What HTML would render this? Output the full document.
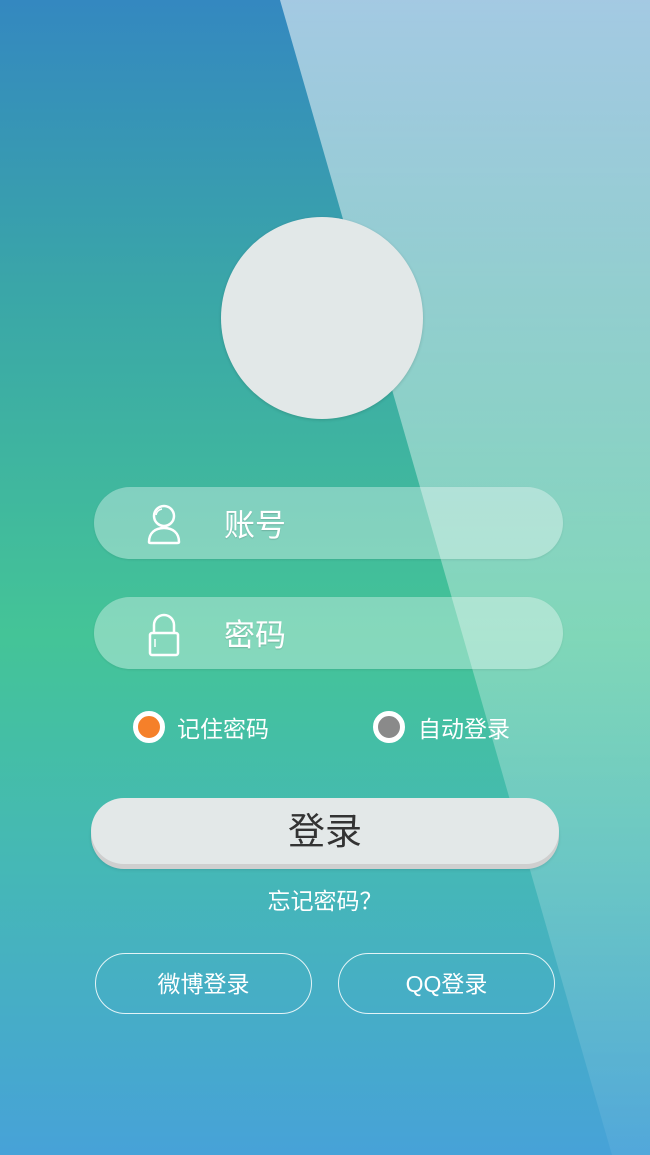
<!DOCTYPE html>
<html><head><meta charset="utf-8"><style>
body{margin:0;width:650px;height:1155px;overflow:hidden;position:relative;font-family:"Liberation Sans","Noto Sans CJK SC",sans-serif;
background:linear-gradient(180deg,#3488c0 0%,#3aa6a8 25%,#44c497 55%,#45b8b6 75%,#47a2d8 100%);}
.ov{position:absolute;left:0;top:0}
.av{position:absolute;left:221px;top:217px;width:202px;height:202px;border-radius:50%;background:#e2e8e8;box-shadow:0 1px 3px rgba(0,0,0,.15)}
.in{position:absolute;left:94px;width:469px;height:72px;border-radius:36px;background:rgba(255,255,255,.35);box-shadow:0 1px 2px rgba(0,0,0,.08)}
.in span{position:absolute;left:130px;top:13px;font-size:31px;color:#fff;text-shadow:0 1px 1px rgba(0,0,0,.15)}
.in svg{position:absolute;left:52px;top:16px}
.rd{position:absolute;width:22px;height:22px;border-radius:50%;border:5px solid #fff;box-sizing:content-box}
.lb{position:absolute;font-size:23px;color:#fff}
.btn{position:absolute;left:91px;top:798px;width:468px;height:66px;border-radius:34px;background:#e3e8e8;box-shadow:0 5px 0 #cfcfcf,0 6px 3px rgba(0,0,0,.1);text-align:center;line-height:68px;font-size:37px;color:#333}
.ob{position:absolute;top:953px;width:215px;height:59px;border:1.5px solid rgba(255,255,255,.85);border-radius:31px;text-align:center;line-height:60px;font-size:23px;color:#fff}
</style></head><body>
<svg class="ov" width="650" height="1155"><defs><linearGradient id="g" x1="0" y1="0" x2="0" y2="1"><stop offset="0" stop-color="#fff" stop-opacity="0.55"/><stop offset="0.5" stop-color="#fff" stop-opacity="0.35"/><stop offset="1" stop-color="#fff" stop-opacity="0.06"/></linearGradient></defs><polygon points="280,0 650,0 650,1155 612,1155" fill="url(#g)"/></svg>
<div class="av"></div>
<div class="in" style="top:487px"><svg width="36" height="42" viewBox="0 0 36 42" fill="none" stroke="#fff" stroke-width="2.5"><circle cx="18" cy="13" r="10"/><path d="M10 12a7 7 0 0 1 6-6" stroke-width="1.5"/><path d="M3 39c0-9 6-14 15-14s15 5 15 14c0 1-1 1-2 1H5c-1 0-2 0-2-1z"/></svg><span>账号</span></div>
<div class="in" style="top:597px"><svg width="36" height="44" viewBox="0 0 36 44" fill="none" stroke="#fff" stroke-width="2.5"><path d="M8 20V12a10 10 0 0 1 20 0v8"/><rect x="4" y="20" width="28" height="22" rx="2"/><path d="M9 26v8" stroke-width="1.5"/></svg><span>密码</span></div>
<div class="rd" style="left:133px;top:711px;background:#f5802a"></div><div class="lb" style="left:177px;top:710px">记住密码</div>
<div class="rd" style="left:373px;top:711px;background:#8a8a8a"></div><div class="lb" style="left:418px;top:710px">自动登录</div>
<div class="btn">登录</div>
<div class="lb" style="left:0;width:650px;text-align:center;top:882px;font-family:'Noto Sans CJK SC',sans-serif">忘记密码？</div>
<div class="ob" style="left:95px">微博登录</div>
<div class="ob" style="left:338px">QQ登录</div>
</body></html>
